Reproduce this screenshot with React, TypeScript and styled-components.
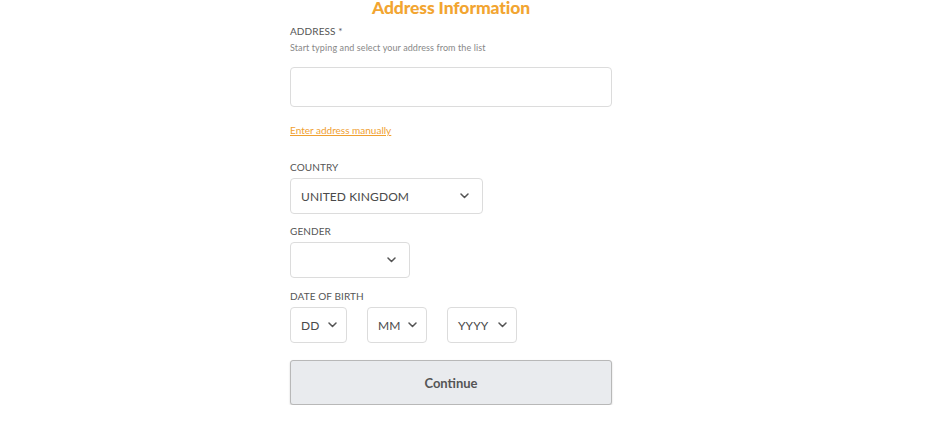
import React from "react";
import styled, { createGlobalStyle } from "styled-components";

const Global = createGlobalStyle`
  html, body { margin: 0; padding: 0; background: #ffffff; }
  body { font-family: "Lato", "Open Sans", sans-serif; }
`;

const Page = styled.div`
  padding-left: 290px;
`;

const Column = styled.div`
  width: 322px;
  display: flex;
  flex-direction: column;
`;

const Title = styled.h2`
  margin: -2px 0 6px;
  font-size: 17.5px;
  line-height: 20px;
  font-weight: 900;
  color: #f2a531;
  text-align: center;
  letter-spacing: -0.1px;
`;

const Label = styled.div`
  font-size: 10px;
  line-height: 14px;
  color: #555;
  text-transform: uppercase;
  letter-spacing: 0.1px;
`;

const Helper = styled.div`
  margin-top: 3px;
  font-size: 9px;
  line-height: 14px;
  color: #888;
  letter-spacing: 0.1px;
`;

const TextInput = styled.div`
  margin-top: 12px;
  height: 40px;
  box-sizing: border-box;
  border: 1px solid #dcdcdc;
  border-radius: 4px;
  background: #fff;
`;

const Link = styled.a`
  margin-top: 16px;
  align-self: flex-start;
  font-size: 10px;
  line-height: 14px;
  color: #f0a030;
  text-decoration: underline;
  cursor: pointer;
`;

const Field = styled.div<{ $top: number }>`
  margin-top: ${(p) => p.$top}px;
  display: flex;
  flex-direction: column;
  gap: 4px;
`;

const Row = styled.div`
  display: flex;
  gap: 20px;
`;

const Select = styled.div<{ $w: number; $pr: number }>`
  width: ${(p) => p.$w}px;
  height: 36px;
  box-sizing: border-box;
  border: 1px solid #dcdcdc;
  border-radius: 4px;
  background: #fff;
  display: flex;
  align-items: center;
  justify-content: space-between;
  padding: 0 ${(p) => p.$pr}px 0 10px;
  font-size: 12px;
  letter-spacing: 0.1px;
  color: #4a4a4a;
`;

const Button = styled.button`
  margin-top: 17px;
  height: 45px;
  width: 322px;
  border: 1px solid #b8b8b8;
  border-radius: 3px;
  background: #e9ebee;
  box-shadow: 0 1px 2px rgba(0, 0, 0, 0.18);
  font-family: inherit;
  font-size: 13px;
  font-weight: 700;
  color: #555;
`;

const Chevron = () => (
  <svg width="9" height="6" viewBox="0 0 9 6" fill="none">
    <path d="M1 1l3.5 3.5L8 1" stroke="#555" strokeWidth="1.5" strokeLinecap="round" strokeLinejoin="round" />
  </svg>
);

export default function App() {
  return (
    <>
      <Global />
      <Page>
        <Column>
          <Title>Address Information</Title>
          <Label>Address *</Label>
          <Helper>Start typing and select your address from the list</Helper>
          <TextInput />
          <Link>Enter address manually</Link>
          <Field $top={23}>
            <Label>Country</Label>
            <Select $w={193} $pr={13}>
              <span>UNITED KINGDOM</span>
              <Chevron />
            </Select>
          </Field>
          <Field $top={10}>
            <Label>Gender</Label>
            <Select $w={120} $pr={13}>
              <span></span>
              <Chevron />
            </Select>
          </Field>
          <Field $top={11}>
            <Label>Date of birth</Label>
            <Row>
              <Select $w={57} $pr={9}>
                <span>DD</span>
                <Chevron />
              </Select>
              <Select $w={60} $pr={9}>
                <span>MM</span>
                <Chevron />
              </Select>
              <Select $w={70} $pr={9}>
                <span>YYYY</span>
                <Chevron />
              </Select>
            </Row>
          </Field>
          <Button>Continue</Button>
        </Column>
      </Page>
    </>
  );
}
